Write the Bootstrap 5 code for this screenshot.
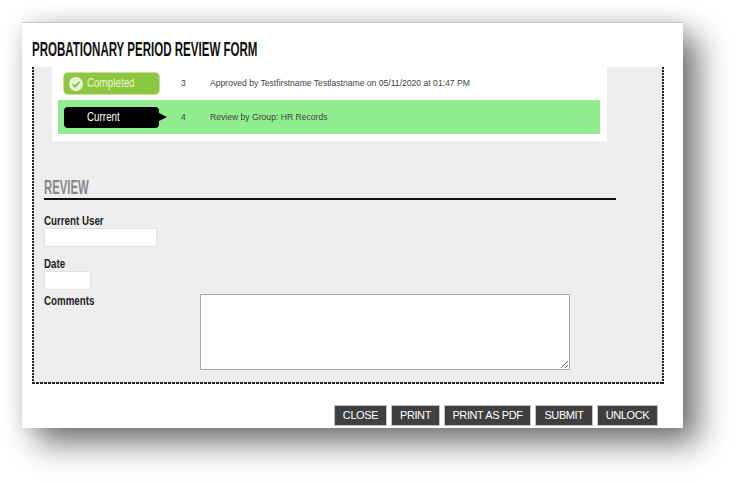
<!DOCTYPE html>
<html lang="en"><head><meta charset="utf-8"><title>Probationary Period Review Form</title>
<link href="https://cdn.jsdelivr.net/npm/bootstrap@5.3.0/dist/css/bootstrap.min.css" rel="stylesheet">
<style>
html,body{height:483px;overflow:hidden;background:#fff}
body{padding:22px 0 0 22px;font-family:"Liberation Sans",Arial,sans-serif}
.win{width:661px;height:406px;background:#fff;border-top:1px solid #c8c8c8;box-shadow:15px 15px 30px rgba(0,0,0,.55),0 0 18px rgba(0,0,0,.1);padding:0 19px 0 10px}
.ttl{height:44px;padding-top:14px;margin:0;font-size:20px;line-height:24px;font-weight:700;color:#111;white-space:nowrap}
.nar{display:inline-block;transform-origin:left center;white-space:nowrap}
.ttl .nar{transform:scaleX(.577)}
.pane{height:317px;padding:0 2px 2px 12px;
 background:
  repeating-linear-gradient(180deg,#222 0 2px,transparent 2px 3px) left top/2px 100% no-repeat,
  repeating-linear-gradient(180deg,#222 0 2px,transparent 2px 3px) right top/2px 100% no-repeat,
  repeating-linear-gradient(90deg,#222 0 3px,transparent 3px 4px) left bottom/100% 2px no-repeat,
  #eee}
.hist{width:555px;height:74px;margin-left:8px;background:#fff;padding:0 7px 0 6px;font-size:8.6px;color:#444}
.hrow{height:33px}
.hcur{height:34px;background:#90ee90;box-shadow:inset 0 0 0 1px #9ae59a}
.pill{width:95px;height:21px;margin-left:6px;border-radius:4px;color:#fff;font-size:12px;line-height:21px;flex:none;position:relative;padding-left:23px}
.pill .nar{transform:scaleX(.82)}
.pok{background:#8dc63f;box-shadow:0 0 0 1px #c5e29a;color:#e8f5d3}
.pcur{background:#000}
.pcur::after{content:"";position:absolute;right:-8px;top:6px;border-left:8px solid #000;border-top:4.5px solid transparent;border-bottom:4.5px solid transparent}
.pill svg{position:absolute;left:5px;top:3.5px}
.num{width:29px;margin-left:22px;flex:none}
.rev{margin:36px 0 0;width:572px;height:23px;border-bottom:2px solid #111;font-size:21px;line-height:20px;font-weight:700;color:#888}
.rev .nar{transform:scaleX(.54)}
.lbl{font-size:12.5px;line-height:14px;font-weight:700;color:#222}
.lbl .nar{transform:scaleX(.78)}
.l1{margin-top:14px}
.l2{margin-top:10px}
.fld{display:block;background:#fff;border:1px solid #e2e2e2;height:19px;padding:0}
.fuser{width:113px}
.fdate{width:47px}
.lc{width:156px;flex:none}
.cmt{width:370px;height:76px;border:1px solid #aaa;background:#fff;display:block;padding:0}
.act{height:44px;padding-top:21px;margin-right:6px;gap:4px}
.act .btn{background:#404040;border:1px solid #c4c4c4;border-radius:0;color:#fff;font-size:11px;line-height:19px;height:21px;padding:0;letter-spacing:-.4px;flex:none}
.act .b1{width:53px}.act .b2{width:49px}.act .b3{width:87px}.act .b4{width:58px}.act .b5{width:61px}
</style></head><body>
<div class="win">
  <h1 class="ttl"><span class="nar">PROBATIONARY PERIOD REVIEW FORM</span></h1>
  <div class="pane">
    <div class="hist">
      <div class="hrow d-flex align-items-center">
        <div class="pill pok"><svg width="14" height="14" viewBox="0 0 14 14"><circle cx="7" cy="7" r="7" fill="#e9f5d8"/><path d="M3.6 7.2 6 9.6 10.5 4.8" fill="none" stroke="#8dc63f" stroke-width="2"/></svg><span class="nar">Completed</span></div>
        <div class="num">3</div><div>Approved by Testfirstname Testlastname on 05/11/2020 at 01:47 PM</div>
      </div>
      <div class="hrow hcur d-flex align-items-center">
        <div class="pill pcur"><span class="nar">Current</span></div>
        <div class="num">4</div><div>Review by Group: HR Records</div>
      </div>
    </div>
    <h2 class="rev"><span class="nar">REVIEW</span></h2>
    <div class="lbl l1"><span class="nar">Current User</span></div>
    <input class="fld fuser" aria-label="Current User">
    <div class="lbl l2"><span class="nar">Date</span></div>
    <input class="fld fdate" aria-label="Date">
    <div class="d-flex mt-1">
      <div class="lbl lc"><span class="nar">Comments</span></div>
      <textarea class="cmt" aria-label="Comments"></textarea>
    </div>
  </div>
  <div class="act d-flex justify-content-end">
    <button class="btn b1">CLOSE</button><button class="btn b2">PRINT</button><button class="btn b3">PRINT AS PDF</button><button class="btn b4">SUBMIT</button><button class="btn b5">UNLOCK</button>
  </div>
</div>
</body></html>
